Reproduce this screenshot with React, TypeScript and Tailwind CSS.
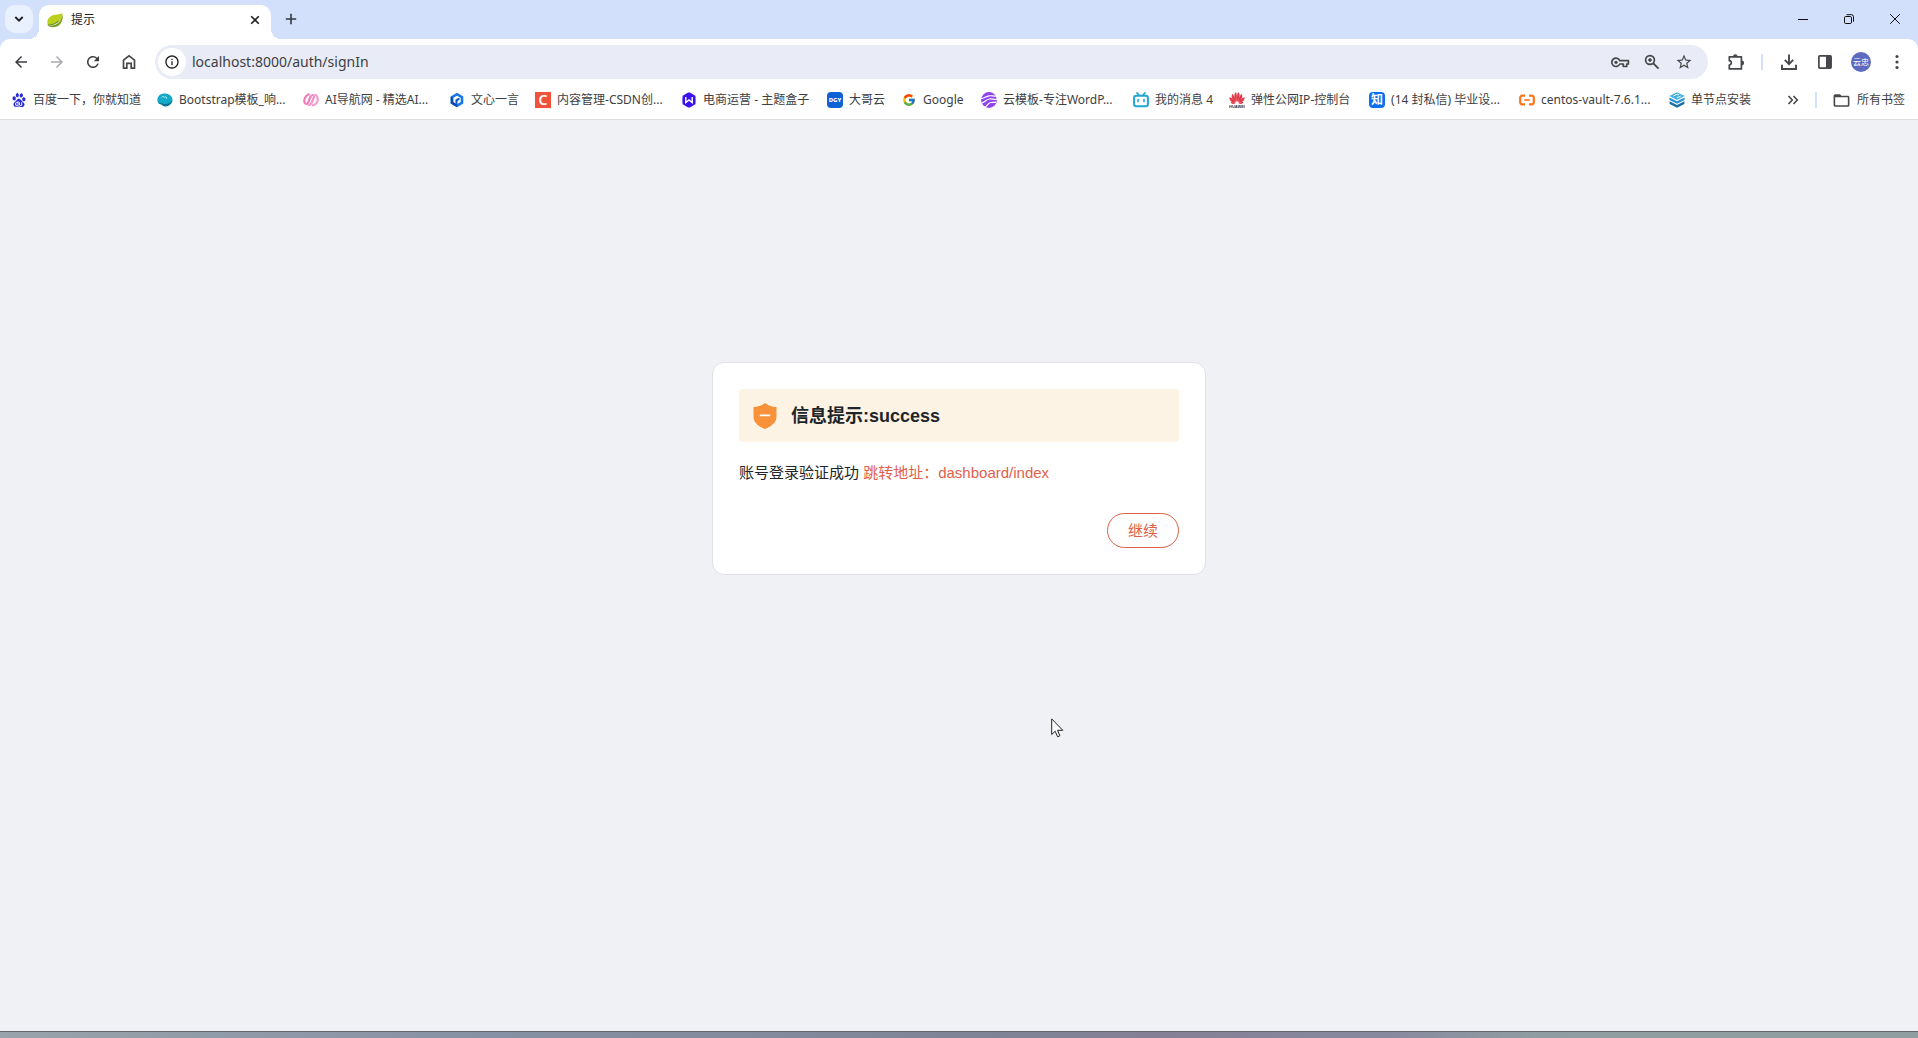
import React from "react";
import { FcGoogle } from "react-icons/fc";
import { SiBaidu } from "react-icons/si";
import { MdFolderOpen, MdArrowBack, MdArrowForward, MdRefresh, MdStarBorder, MdInfoOutline } from "react-icons/md";

const UI_FONT = "font-['Noto_Sans','Noto_Sans_CJK_SC',sans-serif]";
const PAGE_FONT = "font-['Liberation_Sans','Noto_Sans_CJK_SC',sans-serif]";

function IconButton({ label, className = "", children }: { label: string; className?: string; children: React.ReactNode }) {
  return (
    <button type="button" aria-label={label} className={`flex size-7 shrink-0 items-center justify-center ${className}`}>
      {children}
    </button>
  );
}

function LeafIcon() {
  return (
    <svg viewBox="0 0 16 16" className="size-4 shrink-0">
      <path d="M15.3.8C13 3 8 1.800 3.500 4.500.300 6.500-.200 10 .900 13.500c3.500-1.500 8-1.500 11.500-4.500 2.500-2.300 3.300-5 2.900-8.200z" fill="#bccf1e" />
      <path d="M15.500 2.500c.8 4.500-.5 8.500-3.700 11C8.800 15.700 4 15.700.900 13.700c4.500.3 9-.8 11.700-4.200 1.700-2.200 2.500-4.500 2.900-7z" fill="#7d9f24" />
      <path d="M.9 13.200c4-.3 7.500-1.200 10.500-4" stroke="#6f9426" strokeWidth="1.200" fill="none" />
    </svg>
  );
}

function HomeIcon() {
  return (
    <svg viewBox="0 0 16 16" className="size-4">
      <path d="M2.500 14.200V6.200L8 1.900l5.500 4.300v8h-3.300V9.300H5.800v4.900z" fill="none" stroke="#45474a" strokeWidth="1.700" />
    </svg>
  );
}

function KeyIcon() {
  return (
    <svg viewBox="0 0 20 14" className="h-3.5 w-5" fill="none" stroke="#45474a" strokeWidth="1.700">
      <path d="M9.800 5.600h8.600v3.400h-1.700v2.500h-3.400V9H9.800a4.200 4.200 0 1 1 0-3.400z" strokeLinejoin="round" />
      <circle cx="6" cy="7.300" r="1.600" fill="#45474a" stroke="none" />
    </svg>
  );
}

function ZoomIcon() {
  return (
    <svg viewBox="0 0 16 16" className="size-4" fill="none" stroke="#45474a">
      <circle cx="6" cy="6" r="4.400" strokeWidth="1.700" />
      <path d="M9.300 9.300 14.600 14.600" strokeWidth="1.900" />
      <path d="M6 4v4M4 6h4" strokeWidth="1.500" />
    </svg>
  );
}

function PuzzleIcon() {
  return (
    <svg viewBox="0 0 18 18" className="size-[18px]">
      <path
        d="M2.300 3.800h12.100v12.100H2.300v-3.900c2.700-.3 2.700-4 0-4.300z"
        fill="none" stroke="#45474a" strokeWidth="1.700" strokeLinejoin="round"
      />
      <path d="M6 3.500a2.300 2.300 0 0 1 4.600 0zM14.800 7.600a2.300 2.300 0 0 1 0 4.600z" fill="#45474a" />
    </svg>
  );
}

function DownloadIcon() {
  return (
    <svg viewBox="0 0 18 18" className="size-[18px]" fill="none" stroke="#45474a" strokeWidth="1.900">
      <path d="M9 1.500v9.300M4.800 6.900 9 11.100l4.200-4.200M2 11.800V16h14v-4.200" />
    </svg>
  );
}

function SidePanelIcon() {
  return (
    <svg viewBox="0 0 16 16" className="size-4">
      <rect x="1.900" y="1.900" width="12.200" height="12.200" rx=".8" fill="none" stroke="#45474a" strokeWidth="1.700" />
      <path d="M9 2h5v12H9z" fill="#45474a" />
    </svg>
  );
}

function ShellIcon() {
  return (
    <svg viewBox="0 0 16 16" className="size-4">
      <path d="M.4 8.500C.2 4 3.500 1.600 7.500 1.600c4.500 0 7.800 2.400 8 5.900.2 4-3.500 6.700-7 6.700-2.500 0-3.500-1.700-5-2.200C1.500 11.300.5 10.500.4 8.500z" fill="#14a9c8" />
      <path d="M.8 9.800c1.700 1.700 3.200 1.200 5.200 1.900 3 1 7.300-.5 9.400-3.400-.7 3.600-4 6.200-7.100 6.200-2.200 0-3.200-1.600-4.700-2.200-1.300-.4-2.400-.8-2.800-2.500z" fill="#0b7594" />
      <path d="M4.500 5.500c1-1.500 2.700-1 3 .3M7.500 5c1.500-.6 2.500.5 2 1.700" stroke="#b7ecf5" strokeWidth=".9" fill="none" />
    </svg>
  );
}

function AiNavIcon() {
  return (
    <svg viewBox="0 0 16 16" className="size-4" fill="none" strokeWidth="2.200" strokeLinecap="round">
      <path d="M5.800 2.300C2.600 3.400.9 7 1.400 10c.4 2.400 2.800 2.700 3.800.3L7.400 5" stroke="#f07dba" />
      <path d="M7.400 5c1.200-3 4.300-2.500 3.300.6L8.800 10.400" stroke="#f28dc3" />
      <path d="M8.800 10.400c-.8 2-2.400 2.600-3.200 2.500M12.600 2.900c2.300 1.600 2.700 5 1.400 7.300-.9 1.600-2.200 2.700-4 3.200" stroke="#f59ccb" />
    </svg>
  );
}

function WenxinIcon() {
  return (
    <svg viewBox="0 0 16 16" className="size-4">
      <path d="M8 .8 14.300 4.400v7.200L8 15.200 1.700 11.600V4.400z" fill="#1677e8" />
      <path d="M1.700 4.400v7.200L8 15.200V12l-3.300-2V6z" fill="#0a4aaf" />
      <path d="M8 3.700 11.700 5.800v4.300L8 12.200 4.400 10.100V5.800z" fill="#fff" />
      <path d="M6.500 11.500V7.500L10.500 5.500v2.200L8.500 8.900v3.300z" fill="#0d55c4" />
    </svg>
  );
}

function ThemeBoxIcon() {
  return (
    <svg viewBox="0 0 16 16" className="size-4">
      <path d="M8 .3c.5 0 5.700 3 6.300 3.500.4.600.4 7.800 0 8.400-.6.500-5.800 3.500-6.300 3.500s-5.700-3-6.300-3.500c-.4-.6-.4-7.800 0-8.400C2.300 3.300 7.500.3 8 .3z" fill="#3b12ee" />
      <path d="M4.800 5v5.600L8 7.900l3.200 2.700V5" fill="none" stroke="#fff" strokeWidth="1.400" />
    </svg>
  );
}

function CloudTemplateIcon() {
  return (
    <svg viewBox="0 0 16 16" className="size-4">
      <circle cx="8" cy="8" r="7.900" fill="#8f45ee" />
      <path d="M-.5 6.500C3 6.800 4.500 4.200 8 3.800c3-.4 5 .8 8 .2M.500 11c3.500-.3 4.300-3.600 8-4 2.800-.3 4.500.6 7.500.2M3.500 15.500c2.500-.8 3-4 6-5 1.800-.5 3.300.2 5.500-.3" fill="none" stroke="#fff" strokeWidth="1.200" />
    </svg>
  );
}

function BiliIcon() {
  return (
    <svg viewBox="0 0 16 16" className="size-4" fill="none" stroke="#22a4d6" strokeLinecap="round">
      <rect x="1.100" y="3.700" width="13.800" height="10.600" rx="2" strokeWidth="2" />
      <path d="M4 .9 6 3M12 .9 10 3" strokeWidth="1.700" />
      <path d="M5 7.700v1.600M11 7.700v1.600" strokeWidth="1.700" />
    </svg>
  );
}

function HuaweiIcon() {
  return (
    <svg viewBox="0 0 16 16" className="size-4">
      <g fill="#e23a48">
        <path d="M7.700 10C5.300 7 4.500 2 6.700.3c1.200.6 1.500 5 1 9.700zM8.300 10c2.400-3 3.200-8 1-9.700-1.200.6-1.500 5-1 9.700z" />
        <path d="M7.100 10.300C3.500 8.200 1.800 5 3.200 2 4.800 2.600 6.500 6.500 7.100 10.300zM8.900 10.300c3.600-2.100 5.300-5.300 3.900-8.300-1.600.6-3.300 4.500-3.900 8.300z" />
        <path d="M6.700 10.800C2.900 10.600.2 8.600.4 5.200c2 .2 4.800 2.800 6.300 5.600zM9.300 10.800c3.800-.2 6.500-2.200 6.300-5.600-2 .2-4.800 2.800-6.300 5.600z" />
        <path d="M6.600 11.300c-2 1-4 1.100-5-1 1.300-.5 3.300 0 5 1zM9.400 11.300c2 1 4 1.100 5-1-1.300-.5-3.300 0-5 1z" />
      </g>
      <text x="8" y="15.800" textAnchor="middle" fontSize="4" fontWeight="700" fontFamily="Liberation Sans, sans-serif" fill="#333">HUAWEI</text>
    </svg>
  );
}

function AliyunIcon() {
  return (
    <svg viewBox="0 0 16 16" className="size-4" fill="none" stroke="#ff7417" strokeWidth="2.200">
      <path d="M6 3.700H3.200A2 2 0 0 0 1.200 5.700v4.600a2 2 0 0 0 2 2H6M10 3.700h2.800a2 2 0 0 1 2 2v4.600a2 2 0 0 1-2 2H10" />
      <path d="M5.300 8h5.400" strokeWidth="1.700" />
    </svg>
  );
}

function LayersIcon() {
  return (
    <svg viewBox="0 0 16 16" className="size-4">
      <path d="M8 .2 15.700 4 8 7.900.3 4z" fill="#43b0e3" />
      <path d="M.4 5.400 8 9.200l7.600-3.800v2.500L8 11.700.4 7.900z" fill="#2c93cd" />
      <path d="M.6 9.300 8 13l7.400-3.700v2.600L8 15.800.6 11.900z" fill="#1b6fa6" />
      <path d="M4.500 4 8.300 2.100l1.600.8M8 5.900 11.800 4" fill="none" stroke="#fff" strokeWidth="1" />
    </svg>
  );
}

const bookmarks: { label: string; width?: string; icon: React.ReactNode }[] = [
  { label: "百度一下，你就知道", width: "min-w-[130px]", icon: <SiBaidu className="size-3.5" color="#2a2cd8" /> },
  { label: "Bootstrap模板_响...", width: "min-w-[130px]", icon: <ShellIcon /> },
  { label: "AI导航网 - 精选AI...", width: "min-w-[130px]", icon: <AiNavIcon /> },
  { label: "文心一言", icon: <WenxinIcon /> },
  {
    label: "内容管理-CSDN创...",
    width: "min-w-[130px]",
    icon: <span className="size-4 bg-[#f0523a] text-center text-[14px] leading-4 font-semibold text-white">C</span>,
  },
  { label: "电商运营 - 主题盒子", width: "min-w-[130px]", icon: <ThemeBoxIcon /> },
  {
    label: "大哥云",
    icon: <span className="size-4 rounded bg-[#0f62d6] text-center text-[6px] leading-4 font-extrabold text-white">DGY</span>,
  },
  { label: "Google", width: "min-w-[64px]", icon: <FcGoogle className="size-3.5" /> },
  { label: "云模板-专注WordP...", width: "min-w-[136px]", icon: <CloudTemplateIcon /> },
  { label: "我的消息 4", icon: <BiliIcon /> },
  { label: "弹性公网IP-控制台", width: "min-w-[124px]", icon: <HuaweiIcon /> },
  {
    label: "(14 封私信) 毕业设...",
    width: "min-w-[134px]",
    icon: <span className="size-4 rounded-sm bg-[#0b6ff5] text-center text-[12px] leading-4 font-bold text-white">知</span>,
  },
  { label: "centos-vault-7.6.1...", width: "min-w-[134px]", icon: <AliyunIcon /> },
  { label: "单节点安装", icon: <LayersIcon /> },
];

function TabStrip() {
  return (
    <header className="flex h-[39px] items-end bg-[#d3e0fb]">
      <button type="button" aria-label="搜索标签页" className="mb-1.5 ml-[5px] flex size-7 items-center justify-center rounded-[10px] bg-[#e9f1fe]">
        <svg viewBox="0 0 10 10" className="size-2.5" fill="none" stroke="#202124" strokeWidth="1.900">
          <path d="M1.300 3 5 6.700 8.700 3" />
        </svg>
      </button>
      <div className="relative ml-1.5 flex h-[34px] w-[232px] items-center rounded-t-[10px] bg-white pr-2 pb-1 pl-2">
        <span className="absolute bottom-0 -left-2.5 size-2.5 bg-[radial-gradient(circle_at_0_0,transparent_10px,white_10px)]" />
        <span className="absolute -right-2.5 bottom-0 size-2.5 bg-[radial-gradient(circle_at_100%_0,transparent_10px,white_10px)]" />
        <LeafIcon />
        <span className="ml-2 flex-1 text-[12px] leading-4 text-[#202124]">提示</span>
        <button type="button" aria-label="关闭标签页" className="flex size-4 items-center justify-center">
          <svg viewBox="0 0 10 10" className="size-2.5" fill="none" stroke="#202124" strokeWidth="1.600">
            <path d="M1.200 1.200 8.800 8.800M8.800 1.200 1.200 8.800" />
          </svg>
        </button>
      </div>
      <button type="button" aria-label="新标签页" className="mb-1.5 ml-1.5 flex size-7 items-center justify-center">
        <svg viewBox="0 0 12 12" className="size-3" fill="none" stroke="#35383c" strokeWidth="1.600">
          <path d="M6 .800v10.400M.800 6h10.400" />
        </svg>
      </button>
      <div className="mb-px ml-auto flex h-[38px] items-center">
        <button type="button" aria-label="最小化" className="flex h-full w-[46px] items-center justify-center">
          <svg viewBox="0 0 10 10" className="size-2.5" stroke="#111"><path d="M0 5.500h10" /></svg>
        </button>
        <button type="button" aria-label="还原" className="flex h-full w-[46px] items-center justify-center">
          <svg viewBox="0 0 10 10" className="size-2.5" fill="none" stroke="#111">
            <rect x=".5" y="2.500" width="7" height="7" rx="1.300" />
            <path d="M2.500 .7h5A2 2 0 0 1 9.500 2.700v5" />
          </svg>
        </button>
        <button type="button" aria-label="关闭" className="flex h-full w-[46px] items-center justify-center">
          <svg viewBox="0 0 10 10" className="size-2.5" stroke="#111"><path d="M.2.200 9.800 9.800M9.800.200.200 9.800" /></svg>
        </button>
      </div>
    </header>
  );
}

function Toolbar() {
  return (
    <div className="flex h-[46px] items-center px-[7px]">
      <div className="flex gap-2">
        <IconButton label="后退"><MdArrowBack size={18} color="#3c3e41" /></IconButton>
        <IconButton label="前进"><MdArrowForward size={18} color="#a9abae" /></IconButton>
        <IconButton label="重新加载"><MdRefresh size={18} color="#3c3e41" /></IconButton>
        <IconButton label="主页"><HomeIcon /></IconButton>
      </div>
      <div className="ml-3 flex h-[34px] min-w-0 flex-1 items-center rounded-full bg-[#e9ecf6] pr-2.5 pl-[3px]">
        <IconButton label="查看网站信息" className="rounded-full bg-white"><MdInfoOutline size={16} color="#202124" /></IconButton>
        <input
          aria-label="地址栏"
          defaultValue="localhost:8000/auth/signIn"
          className="ml-1.5 min-w-0 flex-1 bg-transparent text-[14px] leading-5 text-[#3c4043] outline-none"
        />
        <div className="flex gap-1">
          <IconButton label="密码"><KeyIcon /></IconButton>
          <IconButton label="缩放"><ZoomIcon /></IconButton>
          <IconButton label="收藏"><MdStarBorder size={18} color="#45474a" /></IconButton>
        </div>
      </div>
      <IconButton label="扩展程序" className="ml-3.5"><PuzzleIcon /></IconButton>
      <span className="mr-3 ml-[11px] h-4 w-0.5 bg-[#d3e0fb]" />
      <div className="flex gap-2">
        <IconButton label="下载"><DownloadIcon /></IconButton>
        <IconButton label="侧边栏"><SidePanelIcon /></IconButton>
        <IconButton label="个人资料">
          <span className="flex size-5 items-center justify-center rounded-full bg-[#5c6bc0] text-[8px] leading-none text-white">云忠</span>
        </IconButton>
        <IconButton label="菜单">
          <svg viewBox="0 0 4 16" className="h-4 w-1" fill="#45474a">
            <circle cx="2" cy="2.500" r="1.600" /><circle cx="2" cy="8" r="1.600" /><circle cx="2" cy="13.500" r="1.600" />
          </svg>
        </IconButton>
      </div>
    </div>
  );
}

function BookmarksBar() {
  return (
    <nav className="flex h-[34px] items-center pr-[13px] pb-1 pl-[11px] text-[12px] leading-4 whitespace-nowrap text-[#3c4043]">
      <div className="flex min-w-0 flex-1 gap-4 overflow-hidden">
        {bookmarks.map((b) => (
          <a key={b.label} href="#" className={`flex shrink-0 items-center gap-1.5 ${b.width ?? ""}`}>
            <span className="flex size-4 items-center justify-center">{b.icon}</span>
            <span>{b.label}</span>
          </a>
        ))}
      </div>
      <button type="button" aria-label="更多书签" className="flex w-3 items-center">
        <svg viewBox="0 0 12 10" className="h-2.5 w-3" fill="none" stroke="#45474a" strokeWidth="1.600">
          <path d="M1.500 1 5.300 5 1.500 9M6.500 1l3.800 4L6.500 9" />
        </svg>
      </button>
      <span className="mr-[15px] ml-4 h-4 w-0.5 bg-[#d3e0fb]" />
      <button type="button" className="flex items-center gap-1.5">
        <MdFolderOpen size={19} color="#45474a" />
        所有书签
      </button>
    </nav>
  );
}

function NoticeCard() {
  return (
    <section className="mx-auto w-full max-w-[494px] rounded-xl border border-[#dfe1e6] bg-white p-[26px]">
      <div className="flex h-[53px] items-center rounded bg-[#fcf3e4] pl-3.5">
        <svg viewBox="0 0 24 26" className="h-[26px] w-6 shrink-0">
          <path d="M12 0c3.500 2.700 7 3.700 11.500 4v9.500c0 6-5 10-11.500 12.500C5.500 23.500.5 19.500.5 13.500V4C5 3.700 8.500 2.700 12 0z" fill="#f7923a" />
          <path d="M7.500 12.300h9" stroke="#fff" strokeWidth="1.700" strokeLinecap="round" />
        </svg>
        <h1 className="ml-3.5 text-[18px] leading-6 font-bold text-[#212529]">信息提示:success</h1>
      </div>
      <p className="mt-5 text-[15px] leading-[22px] text-[#212529]">
        账号登录验证成功 <a href="#" className="text-[#e25f4b]">跳转地址：dashboard/index</a>
      </p>
      <div className="mt-[29px] flex justify-end">
        <button type="button" className="h-[35px] w-[72px] rounded-full border border-[#dd5f48] text-[15px] leading-5 text-[#dd5f48]">
          继续
        </button>
      </div>
    </section>
  );
}

export default function App() {
  return (
    <div className={`relative flex min-h-screen flex-col bg-[#d3e0fb] ${UI_FONT}`}>
      <TabStrip />
      <div className="rounded-t-[10px] border-b border-[#dcdde0] bg-white">
        <Toolbar />
        <BookmarksBar />
      </div>
      <main className={`flex-1 bg-[#f0f1f5] pt-[242px] ${PAGE_FONT}`}>
        <NoticeCard />
      </main>
      <div className="h-[7px] border-t border-[#63676d] bg-[linear-gradient(90deg,#98a3ab,#8791a5_25%,#7e8495_52%,#857f95_60%,#87899f_72%,#8f9ca1_80%,#919ea1)]" />
      <svg viewBox="0 0 13 20" className="pointer-events-none absolute top-[718px] left-[1051px] h-5 w-[13px]">
        <path d="M.7.900v15.600l3.500-3.300 2.400 5.600 2.300-1-2.400-5.500h5.300z" fill="#fff" stroke="#222" strokeWidth="1" />
      </svg>
    </div>
  );
}
